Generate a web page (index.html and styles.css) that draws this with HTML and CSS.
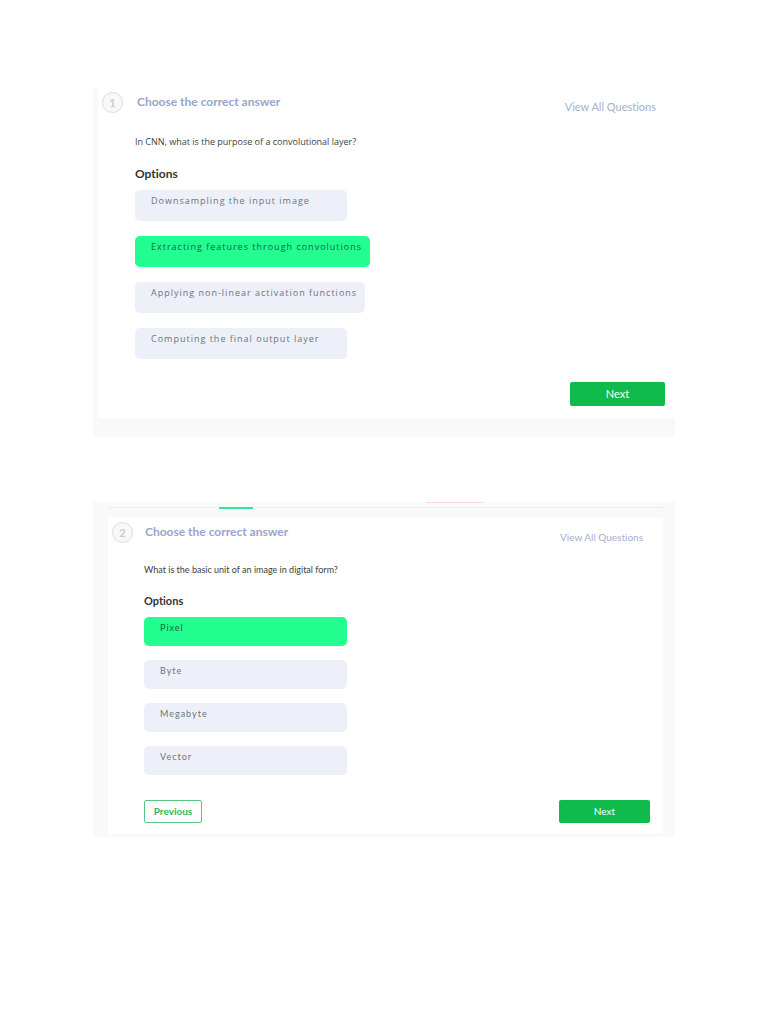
FILE: index.html
```html
<!DOCTYPE html>
<html lang="en">
  <head>
    <meta charset="UTF-8" />
    <meta name="viewport" content="width=device-width, initial-scale=1.0" />
    <title>Quiz</title>
    <link rel="stylesheet" href="styles.css" />
  </head>

  <body>
    <main class="page">
      <section class="sheet first">
        <div class="card">
          <div class="card-head">
            <span class="number">1</span>
            <h2 class="title">Choose the correct answer</h2>
            <a class="view-all" href="#">View All Questions</a>
          </div>
          <div class="card-body">
            <p class="question">In CNN, what is the purpose of a convolutional layer?</p>
            <h3 class="options-title">Options</h3>
            <div class="options">
              <button type="button" class="option">Downsampling the input image</button>
              <button type="button" class="option correct">Extracting features through convolutions</button>
              <button type="button" class="option">Applying non-linear activation functions</button>
              <button type="button" class="option">Computing the final output layer</button>
            </div>
            <div class="actions">
              <button type="button" class="next">Next</button>
            </div>
          </div>
        </div>
      </section>

      <section class="sheet second">
        <div class="tabs"><span class="tab-active"></span><span class="tab-alert"></span></div>
        <div class="card">
          <div class="card-head">
            <span class="number">2</span>
            <h2 class="title">Choose the correct answer</h2>
            <a class="view-all" href="#">View All Questions</a>
          </div>
          <div class="card-body">
            <p class="question">What is the basic unit of an image in digital form?</p>
            <h3 class="options-title">Options</h3>
            <div class="options">
              <button type="button" class="option correct">Pixel</button>
              <button type="button" class="option">Byte</button>
              <button type="button" class="option">Megabyte</button>
              <button type="button" class="option">Vector</button>
            </div>
            <div class="actions">
              <button type="button" class="previous">Previous</button>
              <button type="button" class="next">Next</button>
            </div>
          </div>
        </div>
      </section>
    </main>
  </body>
</html>
```
FILE: styles.css
```css
* {
  box-sizing: border-box;
}

body {
  margin: 0;
  background-color: #fff;
  font-family: Lato, "Open Sans", sans-serif;
  font-variant-ligatures: none;
}

h2,
h3,
p {
  margin: 0;
}

button {
  font-family: inherit;
  cursor: pointer;
}

.page {
  padding: 88px 93px;
}

.sheet {
  background-color: #f8f9fb;
}

.card {
  background-color: #fff;
  border-radius: 2px;
}

.card-head {
  display: flex;
  align-items: flex-start;
  padding: 4px 19px 0 4px;
}

.number {
  width: 21px;
  height: 21px;
  border: 1px solid #dcdcdc;
  border-radius: 50%;
  background-color: #f8f8f8;
  color: #cbcbcb;
  font-size: 11px;
  font-weight: bold;
  line-height: 19px;
  text-align: center;
}

.title {
  flex: 1;
  margin-left: 14px;
  color: #98a5cb;
  font-size: 12px;
  line-height: 20px;
}

.view-all {
  margin-top: 6px;
  color: #a5b0d0;
  font-size: 11px;
  line-height: 18px;
  text-decoration: none;
}

.card-body {
  padding: 16px 10px 12px 37px;
}

.question {
  color: #404040;
  font-size: 9px;
  line-height: 20px;
}

.options-title {
  margin-top: 12px;
  color: #333;
  font-size: 12px;
  line-height: 20px;
}

.options {
  display: flex;
  flex-direction: column;
  align-items: flex-start;
  gap: 15px;
  margin-top: 6px;
}

.option {
  display: flex;
  align-items: flex-start;
  min-width: 212px;
  height: 31px;
  padding: 4px 8px 0 16px;
  border: 0;
  border-radius: 5px;
  background-color: #edf0f8;
  color: #6d737d;
  font-size: 9px;
  letter-spacing: 1px;
  line-height: 14px;
}

.option.correct {
  background-color: #22ff90;
  color: #17643f;
}

.actions {
  display: flex;
  margin-top: 23px;
}

.next {
  width: 95px;
  height: 24px;
  margin-left: auto;
  padding: 0 0 2px;
  border: 0;
  border-radius: 2px;
  background-color: #10bb4b;
  color: #fff;
  font-size: 11px;
}

.previous {
  width: 58px;
  height: 23px;
  padding: 0 0 2px;
  border: 1px solid #55c982;
  border-radius: 2px;
  background-color: #fff;
  color: #2fb862;
  font-size: 10px;
  font-weight: bold;
}

.first {
  padding: 0 0 19px 5px;
}

.first .question,
.first .option {
  font-family: "Open Sans", sans-serif;
}

.second {
  margin-top: 65px;
  padding: 0 12px 3px 15px;
}

/* bottom edge of the tab bar */
.tabs {
  display: flex;
  align-items: flex-end;
  height: 7px;
  margin-bottom: 9px;
  background: linear-gradient(#e9edf0, #e9edf0) 0 5px / 100% 1px no-repeat;
}

.tab-active {
  width: 34px;
  height: 2px;
  margin-left: 20%;
  background-color: #35e596;
}

.tab-alert {
  align-self: flex-start;
  width: 57px;
  height: 1px;
  margin-left: 173px;
  background-color: #fad5d1;
}

.second .card-head {
  padding-right: 20px;
}

.second .title {
  margin-left: 12px;
}

.second .view-all {
  font-size: 10px;
}

.second .card-body {
  padding: 14px 13px 11px 36px;
}

.second .options-title {
  margin-top: 11px;
  font-size: 11px;
}

.second .options {
  gap: 14px;
}

.second .option {
  min-width: 203px;
  height: 29px;
}

.second .actions {
  margin-top: 25px;
}

.second .next {
  width: 91px;
  height: 23px;
  font-size: 10px;
}
```
